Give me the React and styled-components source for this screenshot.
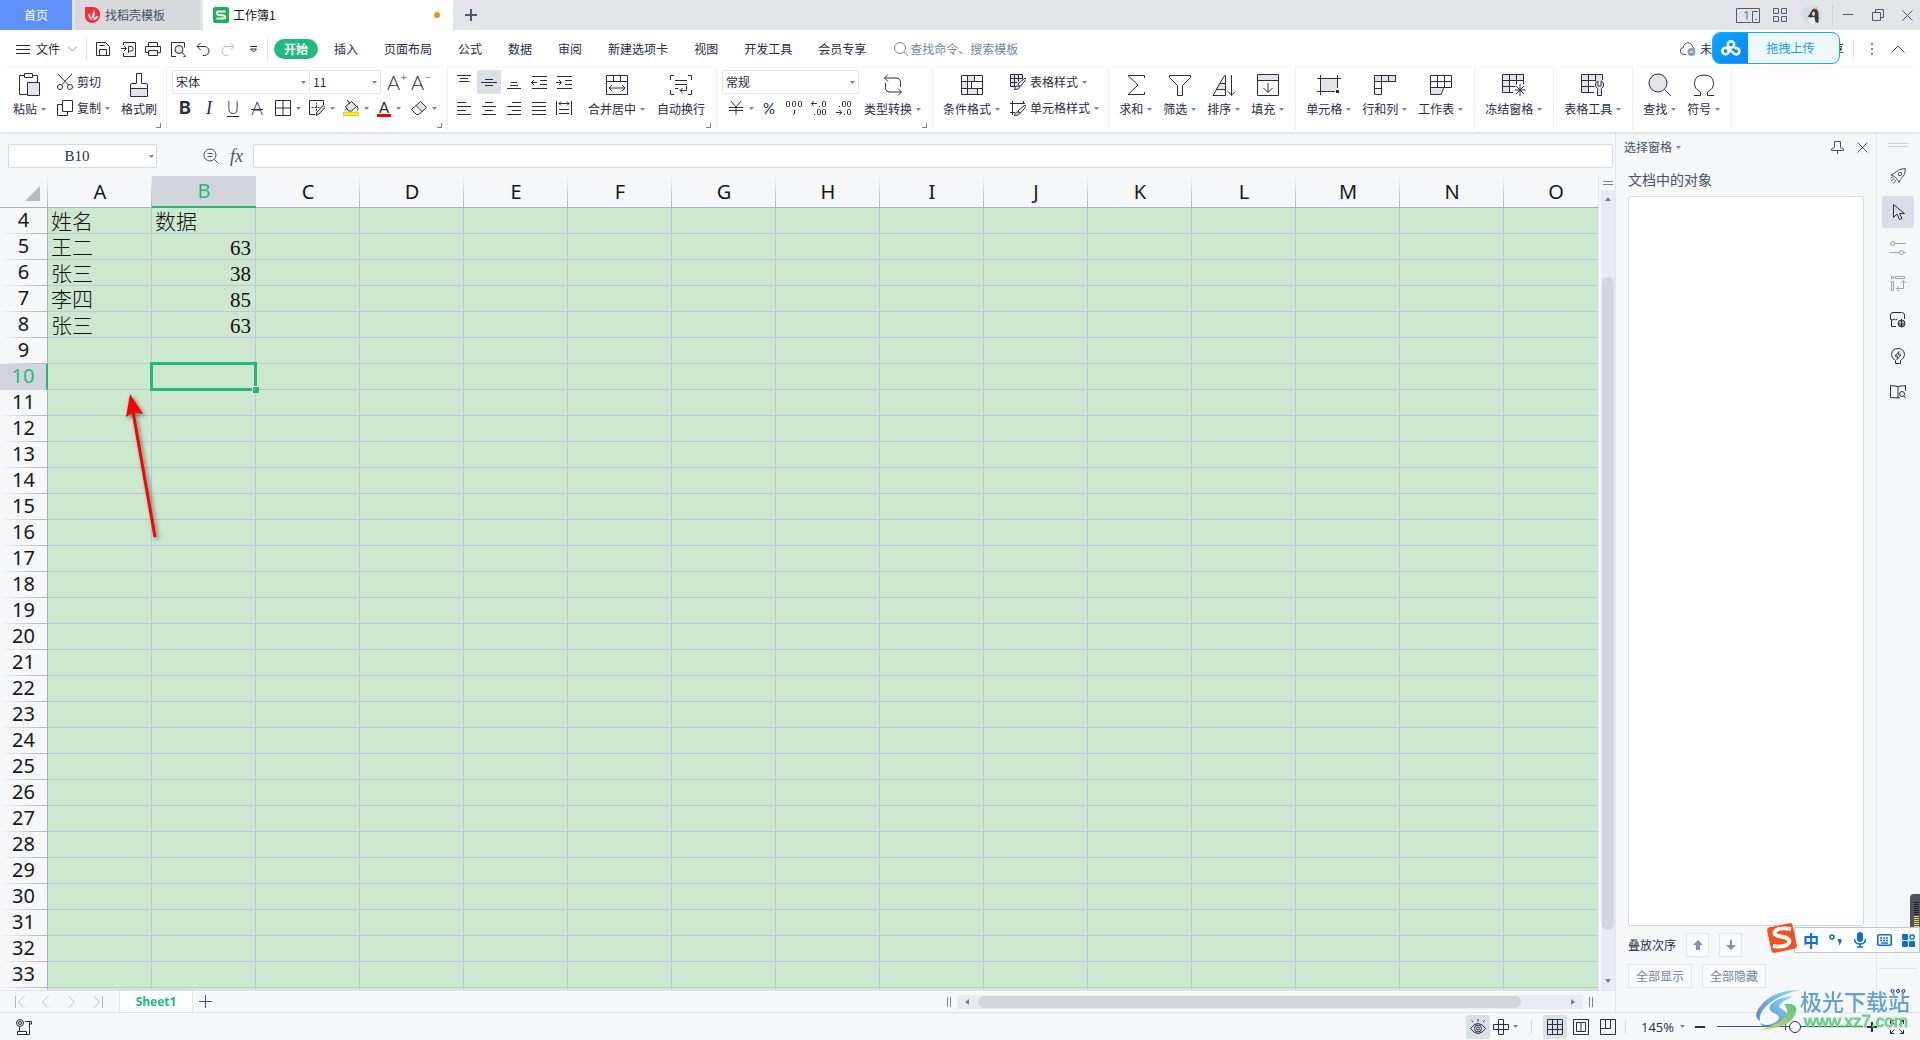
import React from "react";
import styled, { createGlobalStyle, css } from "styled-components";

const c = {
  ink: "#262e42",
  soft: "#46506a",
  muted: "#7684a0",
  faint: "#9aa1b1",
  green: "#21ba7c",
  chrome: "#f5f7f9",
  line: "#e1e4ea",
  field: "#d6d9e0",
  active: "#dae0e6",
  header: "#a9b0c8",
  grid: "#c0c8d6",
  cell: "#cce8cf",
};

const Global = createGlobalStyle`
  * { box-sizing: border-box; }
  html, body, #root { height: 100%; margin: 0; }
  body {
    font: 12px/16px "Noto Sans CJK SC", sans-serif;
    color: ${c.ink};
    overflow: hidden;
  }
  button, input, select {
    font: inherit;
    color: inherit;
    background: none;
    border: 0;
    padding: 0;
    margin: 0;
    outline: 0;
  }
  svg { display: block; flex: none; }
`;

const Page = styled.div`
  height: 100vh;
  display: flex;
  flex-direction: column;
  background: ${c.chrome};
  position: relative;
`;

/* ---------- shared pieces ---------- */
const Draw = styled.svg`
  fill: none;
  stroke: ${(p) => p.$tone || c.ink};
  stroke-width: ${(p) => p.$weight || 1};
`;

function Icon({ w = 16, h = 16, tone, weight, children }) {
  return (
    <Draw width={w} height={h} viewBox={`0 0 ${w} ${h}`} $tone={tone} $weight={weight} aria-hidden="true">
      {children}
    </Draw>
  );
}

const CaretShape = styled.svg`
  fill: ${c.muted};
`;
const Caret = () => (
  <CaretShape width="5" height="3" viewBox="0 0 5 3" aria-hidden="true">
    <path d="M0 0h5L2.5 3z" />
  </CaretShape>
);

const Rule = styled.span`
  width: 1px;
  height: ${(p) => p.$h || 20}px;
  background: ${(p) => p.$tone || c.line};
`;

const G = "#e2e4ea";

/* ---------- title bar ---------- */
const TitleBar = styled.header`
  height: 30px;
  display: flex;
  align-items: stretch;
  background: #e2e4e8;
  flex: none;
`;
const TabStrip = styled.nav`
  display: flex;
  gap: 3px;
`;
const DocTab = styled.button`
  display: flex;
  align-items: center;
  gap: ${(p) => p.$gap || 4}px;
  ${(p) =>
    p.$kind === "home" &&
    css`
      width: 72px;
      justify-content: center;
      color: #fff;
      background: #5f90fb;
    `}
  ${(p) =>
    p.$kind === "idle" &&
    css`
      width: 125px;
      padding-left: 10px;
      color: ${c.soft};
      background: #d8d9dd;
    `}
  ${(p) =>
    p.$kind === "open" &&
    css`
      width: 250px;
      padding: 0 13px 0 10px;
      color: #14161c;
      background: #fff;
    `}
`;
const Unsaved = styled.span`
  width: 6px;
  height: 6px;
  border-radius: 3px;
  margin-left: auto;
  background: #e59a00;
`;
const PlusButton = styled.button`
  width: ${(p) => p.$w}px;
  display: flex;
  align-items: center;
  justify-content: center;
`;
const WindowTools = styled.div`
  margin-left: auto;
  display: flex;
  align-items: center;
`;
const WindowButton = styled.button`
  width: ${(p) => p.$w || 28}px;
  height: 30px;
  display: flex;
  align-items: center;
  justify-content: center;
`;

function Title() {
  return (
    <TitleBar>
      <TabStrip aria-label="文档标签">
        <DocTab $kind="home">首页</DocTab>
        <DocTab $kind="idle">
          <svg width="16" height="16" viewBox="0 0 16 16" aria-hidden="true">
            <path d="M0 0h9a7 7 0 0 1 6 8a8 8 0 0 1-8 8A7 7 0 0 1 0 9z" fill="#fb2c3a" />
            <path d="M7 13C3.800 12 3 9.500 3.500 6.500C5.500 8 6.500 10 7 13zM7.500 12C6.500 8.500 7.300 5 9.500 3C10.500 6.500 9.800 9.500 7.500 12zM8 13.200c1-2.500 2.500-4 5-4.500c-.3 2.600-2 4.300-5 4.500z" fill="#fff" />
          </svg>
          找稻壳模板
        </DocTab>
        <DocTab $kind="open" aria-current="page">
          <svg width="16" height="16" viewBox="0 0 16 16" aria-hidden="true">
            <rect width="16" height="16" rx="2" fill="#1db256" />
            <path d="M12.500 4.500H5.300Q3.800 4.500 3.800 6Q3.800 7.500 5.300 7.800L10.700 8.500Q12.200 8.800 12.200 10.200Q12.200 11.600 10.700 11.600H3.500" fill="none" stroke="#fff" strokeWidth="2" />
          </svg>
          工作簿1
          <Unsaved />
        </DocTab>
      </TabStrip>
      <PlusButton $w={36} aria-label="新建标签">
        <Icon w={12} h={12} tone="#4c5a78" weight={2}>
          <path d="M6 0v12M0 6h12" />
        </Icon>
      </PlusButton>
      <WindowTools>
        <WindowButton $w={40} aria-label="双屏">
          <Icon w={24} h={15} tone="#4c5a78">
            <path d="M15.500 14.500H.5V.5h23v14H16.500V3.500H22M8.500 5L11 3.500v8M19.500 11.500h1.500" />
          </Icon>
        </WindowButton>
        <WindowButton $w={24} aria-label="应用">
          <Icon w={14} h={14} tone="#4c5a78">
            <path d="M.5.5h5v5h-5zM8.500.5h5v5h-5zM.5 8.500h5v5h-5zM8.500 8.500h5v5h-5z" />
          </Icon>
        </WindowButton>
        <WindowButton $w={40} aria-label="账号">
          <svg width="20" height="20" viewBox="0 0 20 20" aria-hidden="true">
            <circle cx="10" cy="10" r="10" fill="#cfdfe4" />
            <path d="M11 4C15 3 17 6 16.500 10.500C16.500 14 17 16 16 18L13.500 17L12.500 12L9 12.500L5.500 11.500C8 10 9.500 5 11 4z" fill="#43363d" />
            <path d="M11.500 6.500c2 0 2 4.500 0 4.500c-2 0-2-4.500 0-4.500z" fill="#ecc9bd" />
            <path d="M6 15l5-3l2 4l-1 3H8z" fill="#e9f1f5" />
            <path d="M12 4l3-1" stroke="#d4a060" strokeWidth="1.500" />
          </svg>
        </WindowButton>
        <Rule $tone="#cccfd6" />
        <WindowButton $w={29} aria-label="最小化">
          <Icon w={10} h={2} tone="#4c5a78"><path d="M0 .5h10" /></Icon>
        </WindowButton>
        <WindowButton $w={32} aria-label="还原">
          <Icon w={12} h={12} tone="#4c5a78">
            <path d="M.5 3.500h8v8h-8zM3.500 3.500v-3h8v8h-3" />
          </Icon>
        </WindowButton>
        <WindowButton $w={26} aria-label="关闭">
          <Icon w={11} h={11} tone="#4c5a78"><path d="M.5.5l10 10M10.500.5l-10 10" /></Icon>
        </WindowButton>
      </WindowTools>
    </TitleBar>
  );
}

/* ---------- menu row ---------- */
const MenuRow = styled.div`
  height: 38px;
  display: flex;
  align-items: center;
  background: #fff;
  flex: none;
`;
const FileButton = styled.button`
  display: flex;
  align-items: center;
  gap: 6px;
  padding: 0 8px 0 16px;
`;
const QuickBar = styled.div`
  display: flex;
  gap: 1px;
  padding: 0 2px 0 4px;
`;
const Tool = styled.button`
  width: 24px;
  height: 24px;
  display: flex;
  align-items: center;
  justify-content: center;
  border-radius: 2px;
  background: ${(p) => (p.$on ? c.active : "transparent")};
`;
const Tabs = styled.nav`
  display: flex;
  gap: 6px;
  padding-left: 6px;
`;
const MenuTab = styled.button`
  height: 20px;
  line-height: 20px;
  padding: 0 10px;
  border-radius: 10px;
  ${(p) =>
    p.$on &&
    css`
      color: #fff;
      font-weight: 700;
      background: ${c.green};
    `}
`;
const Search = styled.label`
  display: flex;
  align-items: center;
  gap: 2px;
  padding-left: 18px;
  input {
    width: 120px;
  }
  input::placeholder {
    color: ${c.muted};
    opacity: 1;
  }
`;
const Share = styled.div`
  margin-left: auto;
  display: flex;
  align-items: center;
  padding-right: 15px;
`;
const CloudButton = styled.button`
  display: flex;
  align-items: center;
  gap: 4px;
`;
const ShareButton = styled.button`
  padding: 0 9px 0 84px;
`;
const MoreButton = styled.button`
  padding: 0 17px;
`;

const cutTabs = ["插入", "页面布局", "公式", "数据", "审阅", "新建选项卡", "视图", "开发工具", "会员专享"];

const quick = [
  ["保存", <path key="p" d="M14.500 14.500h-13v-13h9l4 4zM4.500 14.500V8.500h7v6M4.500 4.500h5" />],
  ["输出", <path key="p" d="M3.500 4v-2.500h12v14h-12V12M1 7.500h5M4 5l2.500 2.500L4 10M8.500 12v-6.500H11a2 2 0 0 1 0 4.500H8.500" />],
  ["打印", <path key="p" d="M3.500 5.500v-4h9v4M3.500 11.500h-3v-6h15v6h-3M3.500 9.500h9v5h-9z" />],
  ["预览", <g key="p"><path d="M6 15.500H1.500v-14h13v5M13.500 15.500h2" /><circle cx="9" cy="8.500" r="4" fill={G} /><path d="M12 11.500l3.500 3.500" /></g>],
  ["撤销", <path key="p" d="M5.500 2L2 5.500L5.500 9M2.500 5.500h7a4.500 4.500 0 0 1 0 9H8" />],
  ["重做", <path key="p" stroke="#b9bcc4" d="M10.500 2L14 5.500L10.500 9M13.500 5.500h-7a4.500 4.500 0 0 0 0 9H8" />],
  ["更多", <path key="p" d="M5 5.500h7M5.500 8l3 3l3-3z" />],
];

function Menu() {
  return (
    <MenuRow>
      <FileButton>
        <Icon w={14} h={11}><path d="M0 1.500h14M0 5.500h14M0 9.500h14" /></Icon>
        文件
        <Icon w={12} h={6} tone={c.faint}><path d="M2 .5l4.500 4.500L11 .5" /></Icon>
      </FileButton>
      <Rule $h={24} />
      <QuickBar>
        {quick.map(([name, art]) => (
          <Tool key={name} aria-label={name}><Icon>{art}</Icon></Tool>
        ))}
      </QuickBar>
      <Rule $h={24} />
      <Tabs aria-label="功能区">
        <MenuTab $on>开始</MenuTab>
        {cutTabs.map((t) => (
          <MenuTab key={t}>{t}</MenuTab>
        ))}
      </Tabs>
      <Search>
        <Icon w={14} h={14} tone={c.muted}>
          <circle cx="6" cy="6" r="5.500" />
          <path d="M10 10l4 4" />
        </Icon>
        <input type="text" aria-label="搜索" placeholder="查找命令、搜索模板" />
      </Search>
      <Share>
        <CloudButton>
          <Icon tone={c.soft}>
            <path d="M6 13.500H4a3.500 3.500 0 0 1-.5-7a4.500 4.500 0 0 1 9-.5q1.500.5 2 2" />
            <circle cx="11.500" cy="11" r="4" fill="#8f9ab2" stroke="none" />
            <path d="M9.500 11h4" stroke="#fff" />
          </Icon>
          未同步
        </CloudButton>
        <ShareButton>分享</ShareButton>
        <Rule />
        <MoreButton aria-label="更多">
          <svg width="3" height="13" viewBox="0 0 3 13" fill={c.muted} aria-hidden="true">
            <path d="M0 0h2v2H0zM0 5h2v2H0zM0 10h2v2H0z" />
          </svg>
        </MoreButton>
        <button aria-label="收起功能区">
          <Icon w={14} h={8} tone={c.soft}><path d="M.5 7.500L7 1l6.500 6.500" /></Icon>
        </button>
      </Share>
    </MenuRow>
  );
}

/* ---------- ribbon ---------- */
const RibbonBar = styled.section`
  height: 64px;
  display: flex;
  flex: none;
  background: #fff;
  padding-bottom: 2px;
  box-shadow: 0 1px 3px rgba(60, 70, 90, 0.18);
  position: relative;
  z-index: 1;
`;
const Group = styled.div`
  position: relative;
  display: flex;
  gap: ${(p) => p.$gap || 11}px;
  padding: 0 ${(p) => p.$end || 11}px 0 ${(p) => p.$start || 10}px;
  border-right: 1px solid #ebedf1;
`;
const Launcher = styled.button`
  position: absolute;
  right: 5px;
  bottom: 2px;
  width: 5px;
  height: 5px;
  border: solid ${c.muted};
  border-width: 0 1px 1px 0;
`;
const Big = styled.button`
  display: flex;
  flex-direction: column;
  align-items: center;
  justify-content: flex-start;
  gap: 4px;
  padding-top: 5px;
`;
const IconBox = styled.span`
  height: 24px;
  display: flex;
  align-items: center;
`;
const Label = styled.span`
  display: flex;
  align-items: center;
  gap: 4px;
  white-space: nowrap;
`;
const Stack = styled.div`
  display: flex;
  flex-direction: column;
  gap: 2px;
  padding-top: 2px;
`;
const ToolRow = styled.div`
  display: flex;
  gap: ${(p) => p.$gap || 0}px;
  padding-left: ${(p) => p.$start || 0}px;
`;
const Wide = styled.button`
  height: 24px;
  display: flex;
  align-items: center;
  gap: 4px;
  white-space: nowrap;
`;
const DropTool = styled.button`
  width: 34px;
  height: 24px;
  display: flex;
  align-items: center;
  gap: 5px;
  padding-left: 6px;
`;
const Field = styled.span`
  width: ${(p) => p.$w}px;
  height: 24px;
  display: flex;
  align-items: center;
  padding: 0 3px;
  background: #fff;
  border: 1px solid ${c.line};
  border-radius: 2px;
  & + & {
    border-left: 0;
  }
  select {
    flex: 1;
    min-width: 0;
    appearance: none;
  }
`;
const Glyph = styled.span`
  font: ${(p) => p.$font || "300 18px/20px Lato, sans-serif"};
  text-decoration: ${(p) => p.$line || "none"};
  text-underline-offset: 2px;
  text-decoration-thickness: 1px;
`;
const ColorGlyph = styled.span`
  width: 14px;
  height: 17px;
  display: flex;
  justify-content: center;
  border-bottom: 3px solid #f00;
  font: 400 15px/14px Lato, sans-serif;
`;
const SizeGlyph = styled.span`
  display: flex;
  font: 300 20px/20px Lato, sans-serif;
  sup {
    font-size: 12px;
    line-height: 10px;
  }
`;

function BigTool({ name, drop, w = 22, h = 22, children }) {
  return (
    <Big>
      <IconBox><Icon w={w} h={h}>{children}</Icon></IconBox>
      <Label>{name}{drop && <Caret />}</Label>
    </Big>
  );
}

const lines = (a) => <Icon><path d={a} /></Icon>;

function Ribbon() {
  return (
    <RibbonBar aria-label="开始">
      <Group $start={13} $end={9}>
        <BigTool name="粘贴" drop w={22} h={24}>
          <path d="M5.500 2.500h-5v19h8M13.500 2.500h5v7M5.500.5h8v4h-8z" />
          <path d="M8.500 9.500h12v13h-12z" fill={G} />
        </BigTool>
        <Stack>
          <Wide>
            <Icon>
              <circle cx="3" cy="13" r="2.500" /><circle cx="13" cy="13" r="2.500" />
              <path d="M1 0l10.500 11M15 0L4.500 11" />
            </Icon>
            剪切
          </Wide>
          <Wide>
            <Icon><path d="M5.500.5h10v11h-10zM5.500 4.500h-5v11h10v-4" /></Icon>
            <Label>复制<Caret /></Label>
          </Wide>
        </Stack>
        <BigTool name="格式刷" w={18} h={24}>
          <path d="M.5 15.500h17v8H.5z" fill={G} />
          <path d="M.5 15.500v-3.500q0-1.500 1.500-1.500h4.500V.5h5v10H16q1.500 0 1.500 1.500v3.500" />
        </BigTool>
        <Launcher aria-label="剪贴板设置" />
      </Group>

      <Group $start={5} $end={8}>
        <Stack>
          <ToolRow>
            <Field $w={138}>
              <select aria-label="字体"><option>宋体</option></select>
              <Caret />
            </Field>
            <Field $w={71}>
              <select aria-label="字号"><option>11</option></select>
              <Caret />
            </Field>
            <ToolRow $start={4}>
              <Tool aria-label="增大字号"><SizeGlyph>A<sup>+</sup></SizeGlyph></Tool>
              <Tool aria-label="减小字号"><SizeGlyph>A<sup>−</sup></SizeGlyph></Tool>
            </ToolRow>
          </ToolRow>
          <ToolRow $start={1}>
            <Tool aria-label="加粗"><Glyph $font="700 18px/20px Inter, sans-serif">B</Glyph></Tool>
            <Tool aria-label="倾斜"><Glyph $font="italic 300 18px/20px 'Liberation Serif', serif">I</Glyph></Tool>
            <Tool aria-label="下划线"><Glyph $line="underline" $font="300 17px/18px Lato, sans-serif">U</Glyph></Tool>
            <Tool aria-label="删除线"><Glyph $line="line-through">A</Glyph></Tool>
            <DropTool aria-label="边框">{lines("M.5.5h15v15H.5zM8 .5v15M.5 8h15")}<Caret /></DropTool>
            <DropTool aria-label="绘制边框">
              <Icon>
                <path d="M6 14.500H.5V.5h14V5" />
                <path d="M7.500 2.500v9M2.500 7.500h8" strokeDasharray="2 1" />
                <path d="M7 15.500l1-3.500L14 5.500l2 2L10 14z" fill={G} />
              </Icon>
              <Caret />
            </DropTool>
            <DropTool aria-label="填充颜色">
              <Icon>
                <path d="M2.500 6.500L8.500 1.500l5 5l-5 4.500H5.500z" fill={G} />
                <path d="M6 4V1.500L4 .5M14 6q2 3 .5 4.500M2 10.500L4 8" />
                <rect x="0" y="12" width="16" height="3.500" rx="1.500" fill="#fff200" stroke="#8a8a60" strokeWidth=".5" />
              </Icon>
              <Caret />
            </DropTool>
            <DropTool aria-label="字体颜色"><ColorGlyph>A</ColorGlyph><Caret /></DropTool>
            <DropTool aria-label="清除">
              <Icon>
                <path d="M5 5.500L9.500 1.500L15.500 7.500L11 11.500z" fill={G} />
                <path d="M5 5.500L.5 9.500l5 5h2L11 11.500" />
              </Icon>
              <Caret />
            </DropTool>
          </ToolRow>
        </Stack>
        <Launcher aria-label="字体设置" />
      </Group>

      <Group $start={4} $gap={12}>
        <Stack>
          <ToolRow $gap={1}>
            <Tool aria-label="顶端对齐">{lines("M1 1.500h14M4 4.500h8M3 7.500h10")}</Tool>
            <Tool $on aria-label="垂直居中">{lines("M4 5.500h8M0 8.500h16M4 11.500h8")}</Tool>
            <Tool aria-label="底端对齐">{lines("M5 8.500h6M4 11.500h8M1 14.500h14")}</Tool>
            <Tool aria-label="减少缩进">{lines("M1 2.500h15M9 6.500h7M9 10.500h7M1 14.500h15M0 8.500h6M3 6L.5 8.500L3 11")}</Tool>
            <Tool aria-label="增加缩进">{lines("M1 2.500h15M9 6.500h7M9 10.500h7M1 14.500h15M0 8.500h6M3 6L5.500 8.500L3 11")}</Tool>
          </ToolRow>
          <ToolRow $gap={1}>
            <Tool aria-label="左对齐">{lines("M1 2.500h9M1 6.500h14M1 10.500h9M1 14.500h14")}</Tool>
            <Tool aria-label="居中">{lines("M4 2.500h8M1 6.500h14M4 10.500h8M1 14.500h14")}</Tool>
            <Tool aria-label="右对齐">{lines("M6 2.500h9M1 6.500h14M6 10.500h9M1 14.500h14")}</Tool>
            <Tool aria-label="两端对齐">{lines("M1 2.500h14M1 6.500h14M1 10.500h14M1 14.500h14")}</Tool>
            <Tool aria-label="分散对齐">{lines("M.5 1v14M15.500 1v14M3 3.500h10M5 1.500l-2 2l2 2M11 1.500l2 2l-2 2M3 9.500h10M3 13.500h10")}</Tool>
          </ToolRow>
        </Stack>
        <BigTool name="合并居中" drop h={20}>
          <path d="M.5.5h21v19H.5zM.5 6.500h21M7.500.5v6M14.500.5v6M3.500 13h15M6 10l-3 3l3 3M16 10l3 3l-3 3" />
        </BigTool>
        <BigTool name="自动换行" h={20}>
          <path d="M4 .5H.5V5M18 .5h3.500V5M.5 15v4.500H4M21.500 15v4.500H18M5 5.500h12M5 9.500h12M5 13.500h3M16.500 11v4.500h-6M13 13l-3 2.500l3 3" />
        </BigTool>
        <Launcher aria-label="对齐设置" />
      </Group>

      <Group $start={5} $gap={5}>
        <Stack>
          <Field $w={137}>
            <select aria-label="数字格式"><option>常规</option></select>
            <Caret />
          </Field>
          <ToolRow $gap={1}>
            <DropTool aria-label="货币">{lines("M3 1l5 6l5-6M1 7.500h14M1 10.500h14M8 7v8")}<Caret /></DropTool>
            <Tool aria-label="百分比"><Glyph $font="400 15px/18px Lato, sans-serif">%</Glyph></Tool>
            <Tool aria-label="千位分隔">
              <Icon w={18}>
                <rect x="1.500" y="1.500" width="3" height="5" rx="1" /><rect x="7.500" y="1.500" width="3" height="5" rx="1" /><rect x="13.500" y="1.500" width="3" height="5" rx="1" />
                <path d="M9.500 10v3l-1 2" />
              </Icon>
            </Tool>
            <Tool aria-label="增加小数">
              <Icon>
                <path d="M0 3.500h6M2.500 1L.5 3.500L2.500 6M8.500 6v1M3.500 14v1" />
                <rect x="11.500" y="1.500" width="3" height="5" rx="1" /><rect x="6.500" y="9.500" width="3" height="5" rx="1" /><rect x="11.500" y="9.500" width="3" height="5" rx="1" />
              </Icon>
            </Tool>
            <Tool aria-label="减少小数">
              <Icon>
                <path d="M0 12.500h6M3.500 10l2 2.500L3.500 15M8.500 14v1M3.500 6v1" />
                <rect x="11.500" y="9.500" width="3" height="5" rx="1" /><rect x="6.500" y="1.500" width="3" height="5" rx="1" /><rect x="11.500" y="1.500" width="3" height="5" rx="1" />
              </Icon>
            </Tool>
          </ToolRow>
        </Stack>
        <BigTool name="类型转换" drop w={20}>
          <path d="M5 .5L1.500 4L5 7.500M2 4h11q4.500 0 4.500 4.500V13M15 14.500l3.500 3.500L15 21.500M18 18H7q-4.500 0-4.500-4.500V9" />
        </BigTool>
        <Launcher aria-label="数字设置" />
      </Group>

      <Group $gap={10} $end={9}>
        <BigTool name="条件格式" drop h={20}>
          <path d="M6 1h8v6H6zM1 7h5v6H1zM14 13h2v6H6v-6z" fill={G} stroke="none" />
          <path d="M.5.5h21v19H.5zM.5 6.500h21M.5 13.500h21M6.500.5v19M13.500.5v6M10.500 6.500v7M16.500 13.500v6" />
        </BigTool>
        <Stack>
          <Wide>
            <Icon>
              <path d="M.5.5h13v13H.5z" fill={G} stroke="none" />
              <path d="M7 12.500H.5V.5h12V5M.5 4.500h12M.5 8.500h7M4.500.5v12M8.500.5v7" />
              <path d="M8 10l7-6l1 1.500l-6 7z" fill="#fff" /><path d="M4.500 15.500q1-5 5-3q.5 3-5 3z" fill={G} />
            </Icon>
            <Label>表格样式<Caret /></Label>
          </Wide>
          <Wide>
            <Icon>
              <path d="M0 3.500h15M2.500 1v14M13.500 1v3M0 12.500h5" />
              <path d="M8 11l7-6l1 1.500l-6 7z" fill="#fff" /><path d="M4.500 15.500q1-5 5-3q.5 3-5 3z" fill={G} />
            </Icon>
            <Label>单元格样式<Caret /></Label>
          </Wide>
        </Stack>
      </Group>

      <Group>
        <BigTool name="求和" drop w={18}>
          <path d="M17.500 4V1.500H1L11 11L1 20.500h16.500V18" />
        </BigTool>
        <BigTool name="筛选" drop>
          <path d="M.5 1.500h21v2l-8 8v10h-5v-10l-8-8z" />
        </BigTool>
        <BigTool name="排序" drop w={24}>
          <path d="M7 9.500h6.500v6H3z" fill={G} stroke="none" />
          <path d="M1 21.500L12.500 1.500h1v20M8 9.500h5.500M4 15.500h9.500M1 21.500h12.500M19.500 1v20M16 17.500l3.500 4l3.500-4" />
        </BigTool>
        <BigTool name="填充" drop>
          <path d="M1 1h20v5H1z" fill={G} stroke="none" />
          <path d="M.5.5h21v21H.5zM.5 6.500h21M11 9v9M6.500 14l4.500 4.500l4.500-4.500" />
        </BigTool>
      </Group>

      <Group>
        <BigTool name="单元格" drop w={24} h={20}>
          <path d="M4 4h16v12H4z" fill={G} stroke="none" />
          <path d="M0 3.500h24M0 16.500h18M3.500 0v20M20.500 0v13" />
          <path d="M19 15h3v3h-3z" fill={c.ink} stroke="none" />
        </BigTool>
        <BigTool name="行和列" drop h={20}>
          <path d="M.5.500h21v6H.5z" fill={G} />
          <path d="M.5.5h21v6h-14v13h-7zM7.500.5v6M14.500.5v6M.5 6.500h7M.5 13.500h7" />
        </BigTool>
        <BigTool name="工作表" drop h={20}>
          <path d="M1 13h12l-2 6H1z" fill={G} stroke="none" />
          <path d="M.5.5h21v12h-21zM.5 6.500h21M7.500.5v12M14.500.5v12M.5 12.500v7H11l3-7" />
        </BigTool>
      </Group>

      <Group>
        <BigTool name="冻结窗格" drop w={24}>
          <path d="M1 1h20v6H7v12H1z" fill={G} stroke="none" />
          <path d="M21.500 10V.5H.5v18H11M.5 6.500h21M.5 12.500h13M7.500.5v18M14.500.5v10M18 10v12M12.500 16h11M14 12l8 8M22 12l-8 8" />
        </BigTool>
      </Group>

      <Group>
        <BigTool name="表格工具" drop w={24}>
          <path d="M1 1h6v18H1zM7 1h14v6H7z" fill={G} stroke="none" />
          <path d="M21.500 6V.5H.5v18H13M.5 6.500h14M.5 12.500h13M7.500.5v18M14.500.5v7" />
          <path d="M16.500 21.500v-7q-2.500-1.500-2-4.500q.5-2.500 2.500-3v5h3v-5q2 .5 2.500 3q.5 3-2 4.500v7z" fill={G} />
        </BigTool>
      </Group>

      <Group>
        <BigTool name="查找" drop w={24} h={24}>
          <circle cx="10" cy="10" r="9" fill={G} />
          <path d="M16.500 16.500l6.500 6.500" />
        </BigTool>
        <BigTool name="符号" drop>
          <path d="M1 21.500h6.500V18Q1.500 15 1.500 9.500Q1.500 1 11 1T20.500 9.500Q20.500 15 14.500 18v3.500H21" />
        </BigTool>
      </Group>
    </RibbonBar>
  );
}

/* ---------- workspace ---------- */
const Workspace = styled.div`
  flex: 1;
  min-height: 0;
  display: flex;
`;
const Main = styled.main`
  flex: 1;
  min-width: 0;
  display: flex;
  flex-direction: column;
`;
const FormulaBar = styled.div`
  height: 44px;
  flex: none;
  display: flex;
  align-items: center;
  padding: 4px 2px 0 8px;
`;
const NameBox = styled.div`
  width: 149px;
  height: 24px;
  display: flex;
  align-items: center;
  padding: 0 2px;
  background: #fff;
  border: 1px solid ${c.field};
  border-radius: 2px;
  input {
    flex: 1;
    min-width: 0;
    padding-right: 6px;
    text-align: center;
    font: 15px/20px "Liberation Serif", serif;
  }
`;
const FormulaTools = styled.div`
  display: flex;
  align-items: center;
  gap: 11px;
  padding: 0 10px 0 46px;
  font: italic 18px/20px "Liberation Serif", serif;
  color: ${c.soft};
`;
const FormulaInput = styled.input`
  flex: 1;
  min-width: 0;
  height: 24px;
  background: #fff;
  border: 1px solid ${c.field};
  border-radius: 2px;
`;

const SheetArea = styled.div`
  flex: 1;
  min-height: 0;
  display: flex;
  gap: 2px;
`;
const Viewport = styled.div`
  flex: 1;
  min-width: 0;
  overflow: hidden;
  position: relative;
  border-right: 1px solid ${c.line};
`;
const Grid = styled.table`
  table-layout: fixed;
  width: 1608px;
  border-collapse: separate;
  border-spacing: 0;
`;
const ColHead = styled.th`
  width: ${(p) => p.$w || 104}px;
  height: 32px;
  padding: 0;
  font: 400 20px/28px "Noto Sans", "Open Sans", sans-serif;
  color: #15171c;
  border-bottom: 1px solid ${c.header};
  background: linear-gradient(to top, ${c.header}, transparent) no-repeat right / 1px 100%;
  ${(p) =>
    p.$on &&
    css`
      color: ${c.green};
      background: #d1d4dd;
      border-bottom: 2px solid ${c.green};
    `}
  svg {
    margin: 4px 0 0 25px;
  }
`;
const RowHead = styled.th`
  height: 26px;
  padding: 0 0 2px;
  font: 400 20px/24px "Noto Sans", "Open Sans", sans-serif;
  color: #15171c;
  border-right: 1px solid ${c.header};
  background: linear-gradient(to left, ${c.header}, transparent) no-repeat bottom / 100% 1px;
  ${(p) =>
    p.$on &&
    css`
      color: ${c.green};
      background: #d1d4dd;
      border-right: 2px solid ${c.green};
    `}
`;
const Cell = styled.td`
  height: 26px;
  padding: 4px 4px 0 3px;
  position: relative;
  background: ${c.cell};
  border: solid ${c.grid};
  border-width: 0 1px 1px 0;
  text-align: ${(p) => (p.$num ? "right" : "left")};
  font: 300 21px/21px "Liberation Serif", "Noto Sans CJK SC", serif;
  color: #111;
`;
const Selection = styled.span`
  position: absolute;
  z-index: 1;
  inset: -2px;
  border: 3px solid ${c.green};
  &::after {
    content: "";
    position: absolute;
    right: -5px;
    bottom: -5px;
    width: 6px;
    height: 6px;
    background: ${c.green};
    border: solid #fff;
    border-width: 1px 0 0 1px;
  }
`;
const Arrow = styled.svg`
  position: absolute;
  left: 120px;
  top: 212px;
  filter: drop-shadow(2px 2px 2px rgba(0, 0, 0, 0.5));
`;

const VScroll = styled.div`
  width: 14px;
  display: flex;
  flex-direction: column;
  align-items: center;
`;
const SplitGrip = styled.span`
  width: 10px;
  height: 4px;
  margin: 5px 0;
  border: solid ${c.muted};
  border-width: 1px 0;
`;
const VTrack = styled.div`
  flex: 1;
  align-self: stretch;
  display: flex;
  flex-direction: column;
  align-items: center;
  padding: 7px 1px;
  background: #e9ebf0;
`;
const VSpace = styled.span`
  flex: ${(p) => p.$n};
`;
const VThumb = styled.span`
  flex: 650;
  align-self: stretch;
  border-radius: 6px;
  background: #d3d6df;
`;

const SheetBar = styled.div`
  height: 23px;
  flex: none;
  display: flex;
  align-items: center;
  border-top: 1px solid ${c.line};
  border-bottom: 1px solid ${c.line};
`;
const SheetNav = styled.div`
  display: flex;
  align-items: center;
  gap: 16px;
  padding: 0 16px 0 15px;
`;
const SheetTab = styled.button`
  align-self: stretch;
  width: 74px;
  color: ${c.green};
  font: 700 12px/20px "Open Sans", "Noto Sans", sans-serif;
  background: #fff;
  border-right: 1px solid ${c.line};
  border-left: 1px solid ${c.line};
`;
const HScroll = styled.div`
  width: 668px;
  margin-left: auto;
  padding-right: 22px;
  display: flex;
  align-items: center;
  gap: 6px;
`;
const HGrip = styled.span`
  width: 4px;
  height: 10px;
  border: solid ${c.muted};
  border-width: 0 1px;
`;
const HTrack = styled.div`
  flex: 1;
  height: 14px;
  display: flex;
  align-items: center;
  padding: 0 8px;
  background: #e9ebf0;
`;
const HThumb = styled.span`
  flex: 546;
  height: 12px;
  margin-left: 9px;
  border-radius: 6px;
  background: #d3d6df;
`;
const HSpace = styled.span`
  flex: 50;
`;

const columns = "ABCDEFGHIJKLMNO".split("");
const firstRow = 4;
const lastRow = 33;
const data = {
  A4: "姓名", B4: "数据",
  A5: "王二", B5: 63,
  A6: "张三", B6: 38,
  A7: "李四", B7: 85,
  A8: "张三", B8: 63,
};

function Sheet() {
  // One extra row without a number fills the strip under the last full row.
  const rows = Array.from({ length: lastRow - firstRow + 2 }, (_, i) => firstRow + i);
  return (
    <Viewport>
      <Grid>
        <thead>
          <tr>
            <ColHead $w={48} aria-label="全选">
              <svg width="15" height="15" viewBox="0 0 15 15" aria-hidden="true">
                <path d="M15 0v15H0z" fill="#b9bbc0" />
              </svg>
            </ColHead>
            {columns.map((k) => (
              <ColHead key={k} $on={k === "B"} scope="col">{k}</ColHead>
            ))}
          </tr>
        </thead>
        <tbody>
          {rows.map((r) => (
            <tr key={r}>
              <RowHead $on={r === 10} scope="row">{r <= lastRow ? r : null}</RowHead>
              {columns.map((k) => (
                <Cell key={k} $num={typeof data[k + r] === "number"}>
                  {data[k + r]}
                  {k === "B" && r === 10 && <Selection />}
                </Cell>
              ))}
            </tr>
          ))}
        </tbody>
      </Grid>
      <Arrow width="44" height="156" viewBox="0 0 44 156" aria-hidden="true">
        <path d="M12 18l23 131" stroke="#f00" strokeWidth="3" />
        <path d="M10 6L23 26L14 24L6 29z" fill="#f00" />
      </Arrow>
    </Viewport>
  );
}

const ArrowMark = ({ d, w = 6, h = 4 }) => (
  <CaretShape width={w} height={h} viewBox={`0 0 ${w} ${h}`} aria-hidden="true">
    <path d={d} />
  </CaretShape>
);

/* ---------- selection pane ---------- */
const Pane = styled.aside`
  width: 262px;
  display: flex;
  flex-direction: column;
  border: solid ${c.line};
  border-width: 0 1px 1px 1px;
  color: ${c.soft};
  padding: 0 12px 24px;
`;
const PaneHead = styled.div`
  height: 30px;
  display: flex;
  align-items: center;
  gap: 13px;
  margin: 0 -4px;
  button:first-child {
    margin-right: auto;
  }
`;
const PaneTitle = styled.h2`
  margin: 0;
  font: 400 14px/20px "Noto Sans CJK SC", sans-serif;
  padding: 7px 0;
`;
const ObjectList = styled.ul`
  flex: 1;
  margin: 0;
  padding: 0;
  list-style: none;
  background: #fff;
  border: 1px solid ${c.field};
  border-radius: 2px;
`;
const OrderRow = styled.div`
  display: flex;
  align-items: center;
  gap: 10px;
  padding-top: 7px;
  color: ${c.ink};
`;
const PaneButton = styled.button`
  width: ${(p) => p.$w}px;
  height: ${(p) => p.$h || 24}px;
  display: flex;
  align-items: center;
  justify-content: center;
  color: ${c.muted};
  background: #f8fafb;
  border: 1px solid ${c.line};
`;

const MoveIcon = ({ d }) => (
  <Icon w={10} h={10} tone="none">
    <path d={d} fill="#8790a4" />
  </Icon>
);

function SelectionPane() {
  return (
    <Pane>
      <PaneHead>
        <button><Label>选择窗格<Caret /></Label></button>
        <button aria-label="固定">
          <Icon w={13} h={14} tone={c.soft}>
            <path d="M3.500 1.500h6v6l3 1.500v1.500H.5V9l3-1.500zM6.500 10.500V14" />
          </Icon>
        </button>
        <button aria-label="关闭窗格">
          <Icon w={11} h={11} tone={c.soft}><path d="M.5.5l10 10M10.500.5l-10 10" /></Icon>
        </button>
      </PaneHead>
      <PaneTitle>文档中的对象</PaneTitle>
      <ObjectList aria-label="文档中的对象" />
      <OrderRow>
        叠放次序
        <PaneButton $w={23} aria-label="上移"><MoveIcon d="M5 0l5 5H7v5H3V5H0z" /></PaneButton>
        <PaneButton $w={23} aria-label="下移"><MoveIcon d="M5 10l5-5H6V0H4v5H0z" /></PaneButton>
      </OrderRow>
      <OrderRow>
        <PaneButton $w={64}>全部显示</PaneButton>
        <PaneButton $w={64}>全部隐藏</PaneButton>
      </OrderRow>
    </Pane>
  );
}

/* ---------- task rail ---------- */
const Rail = styled.nav`
  width: 43px;
  padding-right: 1px;
  display: flex;
  flex-direction: column;
  align-items: center;
  gap: 4px;
  border-bottom: 1px solid ${c.line};
`;
const RailGrip = styled.span`
  width: 20px;
  height: 4px;
  margin: 11px 0 9px;
  border: solid #cdd0d6;
  border-width: 1px 0;
`;
const RailButton = styled.button`
  width: 32px;
  height: 32px;
  display: flex;
  align-items: center;
  justify-content: center;
  border-radius: 2px;
  background: ${(p) => (p.$on ? "#d9dee6" : "transparent")};
`;
const RailFoot = styled.div`
  margin-top: auto;
  width: 38px;
  height: 44px;
  display: flex;
  align-items: center;
  justify-content: center;
  border-top: 1px solid ${c.line};
`;

const rail = [
  ["助手", c.soft, <g key="g"><path d="M15.500.5q.5 6-5 11l-1.500 3l-2-3.500l-2.500-2.500L1 7l3-1.500Q9 0 15.500.5zM4.500 10L1 13M6 12l-2.500 3.500M3 8.500L.5 10.500" /><circle cx="10" cy="6" r="1.700" /></g>],
  ["选择", c.ink, <path key="p" d="M3.500.5v13l3.500-3.500l2.500 5.500l2.500-1L9.500 9.500h5z" />],
  ["设置", c.faint, <g key="g"><circle cx="2.500" cy="3.500" r="2" /><path d="M4.500 3.500H16M0 12.500h9.500M13.500 12.500H16" /><circle cx="11.500" cy="12.500" r="2" /></g>],
  ["属性", c.faint, <path key="p" d="M1.500.5h2v2h-2zM5.500.5h9v2h-9zM1.500 5.500h2v9h-2zM13.500 5v7.500H7M11 7l2.500-2.500L16 7M9 10l-2.500 2.500L9 15" />],
  ["素材", c.ink, <g key="g"><path d="M6 14.500H1.500V8M.5 7.500V3q0-2.500 2.500-2.500h8.500Q14.500.5 14.500 3v4M.5 7q2 2 3.500 0q2 2 3.500 0" /><circle cx="11.500" cy="11.500" r="3.500" fill="#aeb3be" /><path d="M11.500 7v8M8.500 11l3 3l3-3" /></g>],
  ["灵感", c.ink, <g key="g"><path d="M5.500 12.500Q1.500 10.500 1.500 6.500Q2 .5 8 .5T14.500 6.500Q14.500 10.500 10.500 12.500v3h-5z" /><path d="M9 3.500L5 8h2.500l-.5 3.500l4-4.500H8.500z" /></g>],
  ["查阅", c.ink, <g key="g"><path d="M8 14L.5 13.500v-12L8 2.500zM8 2.500l7.500-1V7M8 14l2-.5" /><circle cx="12" cy="10" r="2.500" /><path d="M14 12l2 2.500" /></g>],
];

function TaskRail() {
  return (
    <Rail aria-label="任务窗格">
      <RailGrip />
      {rail.map(([name, tone, art]) => (
        <RailButton key={name} aria-label={name} $on={name === "选择"}>
          <Icon tone={tone}>{art}</Icon>
        </RailButton>
      ))}
      <RailFoot>
        <Icon w={16} h={6}>
          <circle cx="2.500" cy="3" r="1.500" /><circle cx="8" cy="3" r="1.500" /><circle cx="13.500" cy="3" r="1.500" />
        </Icon>
      </RailFoot>
    </Rail>
  );
}

/* ---------- status bar ---------- */
const StatusBar = styled.footer`
  height: 27px;
  flex: none;
  display: flex;
  align-items: center;
  padding: 0 16px;
`;
const ViewTools = styled.div`
  margin-left: auto;
  display: flex;
  align-items: center;
`;
const ViewButton = styled(Tool)`
  width: ${(p) => p.$w || 24}px;
  gap: 4px;
`;
const ZoomButton = styled.button`
  display: flex;
  align-items: center;
  gap: 6px;
  padding: 0 10px;
  font: 400 13px/16px "Open Sans", "Noto Sans", sans-serif;
`;
const FullScreen = styled.button`
  padding-left: 13px;
`;
const Slider = styled.input`
  appearance: none;
  width: 146px;
  height: 14px;
  margin: 0 4px 0 12px;
  background:
    linear-gradient(${c.soft}, ${c.soft}) no-repeat 68px center / 1px 6px,
    linear-gradient(${c.soft}, ${c.soft}) no-repeat center / 100% 1px;
  &::-webkit-slider-thumb {
    appearance: none;
    width: 12px;
    height: 12px;
    border: 1px solid ${c.ink};
    border-radius: 6px;
    background: ${c.chrome};
  }
`;

function Status() {
  return (
    <StatusBar>
      <button aria-label="宏">
        <Icon>
          <circle cx="4" cy="4" r="3.500" fill={G} /><circle cx="4" cy="4" r="1.500" />
          <path d="M9 2.500h6.500V5H13M13.500 2.500v13H1.500v-3h9v3M3.500 8v4" />
        </Icon>
      </button>
      <ViewTools>
        <ViewButton $on aria-label="护眼模式">
          <Icon>
            <path d="M.5 9.500Q4 4.500 8 4.500T15.500 9.500Q12 14.500 8 14.500T.5 9.500zM8 0v2.500M1.500 1.500L3 3M14.500 1.500L13 3" />
            <circle cx="8" cy="9.500" r="3.500" /><circle cx="8" cy="9.500" r="1.500" />
          </Icon>
        </ViewButton>
        <ViewButton $w={31} aria-label="阅读模式">
          <Icon><path d="M5.500.5h5v15h-5zM.5 5.500h15v5H.5z" /></Icon>
          <Caret />
        </ViewButton>
        <ViewButton as="span" $w={22}><Rule $h={14} $tone="#d6d9e0" /></ViewButton>
        <ViewButton $on aria-label="普通视图">
          <Icon><path d="M.5.5h15v15H.5zM.5 5.500h15M.5 10.500h15M5.500.5v15M10.500.5v15" /></Icon>
        </ViewButton>
        <ViewButton $w={28} aria-label="页面布局">
          <Icon><path d="M.5.5h15v15H.5zM3.500 3.500h9v9h-9zM8 3.500v9" /></Icon>
        </ViewButton>
        <ViewButton $w={26} aria-label="分页预览">
          <Icon><path d="M.5.5h15v15H.5zM.5 9.500h10v-9M5.500.5v9" /></Icon>
        </ViewButton>
        <ViewButton as="span" $w={10}><Rule $h={14} $tone="#d6d9e0" /></ViewButton>
        <ZoomButton>145%<Caret /></ZoomButton>
        <button aria-label="缩小"><Icon w={10} h={10} weight={2}><path d="M0 5h10" /></Icon></button>
        <Slider type="range" min="0" max="100" defaultValue="54" aria-label="缩放" />
        <button aria-label="放大"><Icon w={10} h={10} weight={2}><path d="M0 5h10M5 0v10" /></Icon></button>
        <FullScreen aria-label="全屏">
          <Icon w={14} h={14}><path d="M.5 4V.5H4M10 .5h3.500V4M.5 10v3.500H4M13.500 10v3.500H10M.5.5l4 4M13.500.5l-4 4M.5 13.500l4-4M13.500 13.500l-4-4" /></Icon>
        </FullScreen>
      </ViewTools>
    </StatusBar>
  );
}

/* ---------- floating desktop widgets ---------- */
const Upload = styled.button`
  position: absolute;
  z-index: 3;
  top: 32px;
  right: 80px;
  width: 128px;
  height: 32px;
  display: flex;
  align-items: center;
  overflow: hidden;
  color: #0a9cff;
  background: #edf8ff;
  border: 1px solid #14a8ff;
  border-radius: 8px;
`;
const UploadMark = styled.span`
  width: 35px;
  height: 32px;
  display: flex;
  align-items: center;
  justify-content: center;
  background: linear-gradient(135deg, #0aa6ff, #0a86ff);
`;
const UploadText = styled.span`
  flex: 1;
  text-align: center;
  padding-right: 6px;
`;
const Meter = styled.div`
  position: absolute;
  z-index: 2;
  right: 0;
  bottom: 88px;
  width: 10px;
  height: 58px;
  padding: 7px 1px 6px 4px;
  border-radius: 4px 0 0 4px;
  background: #50535f;
  div {
    height: 100%;
    background: repeating-linear-gradient(#50535f 0 1px, transparent 1px 2px), linear-gradient(#22242c 14px, #e8d84c 14px);
  }
`;
const Ime = styled.div`
  position: absolute;
  z-index: 3;
  right: 0;
  bottom: 87px;
  height: 26px;
  width: 126px;
  display: flex;
  align-items: center;
  gap: 10px;
  padding: 0 4px 0 8px;
  background: #fff;
  border: 1px solid #b4c8e8;
  color: #0b6fd6;
  font: 700 16px/24px "Noto Sans CJK SC", sans-serif;
`;
const SogouMark = styled.svg`
  position: absolute;
  z-index: 4;
  right: 122px;
  bottom: 86px;
`;
const Watermark = styled.div`
  position: absolute;
  z-index: 4;
  right: 10px;
  bottom: 8px;
  display: flex;
  align-items: center;
  opacity: 0.85;
  pointer-events: none;
`;
const MarkText = styled.div`
  display: flex;
  flex-direction: column;
  color: #4a92cf;
  font: 500 22px/24px "Noto Sans CJK SC", sans-serif;
`;
const MarkUrl = styled.span`
  padding-left: 4px;
  color: #5cc878;
  font: 400 17px/20px "Liberation Sans", sans-serif;
  -webkit-text-stroke: 1px #5cc878;
`;

function Floating() {
  return (
    <>
      <Upload>
        <UploadMark>
          <svg width="20" height="16" viewBox="0 0 20 16" fill="none" stroke="#fff" strokeWidth="2.500" aria-hidden="true">
            <circle cx="10" cy="4.500" r="3.200" /><circle cx="4.500" cy="11" r="3.200" />
            <path d="M7 8.500l5.500 4.500a3.200 3.200 0 1 0 1-4.500" />
          </svg>
        </UploadMark>
        <UploadText>拖拽上传</UploadText>
      </Upload>
      <Meter><div /></Meter>
      <Ime>
        中
        <svg width="14" height="12" viewBox="0 0 14 12" aria-hidden="true">
          <circle cx="3" cy="3" r="2" fill="none" stroke="#0b6fd6" strokeWidth="1.500" />
          <path d="M9 5h3.500v3L10 11.500V8H9z" fill="#0b6fd6" />
        </svg>
        <svg width="14" height="16" viewBox="0 0 14 16" aria-hidden="true">
          <rect x="4" y="0" width="6" height="10" rx="3" fill="#0b6fd6" />
          <path d="M1.500 7q0 5 5.500 5t5.500-5M7 12v3M4 15h6" fill="none" stroke="#0b6fd6" strokeWidth="1.500" />
        </svg>
        <svg width="15" height="12" viewBox="0 0 15 12" aria-hidden="true">
          <rect x=".8" y=".8" width="13.400" height="10.400" rx="1" fill="none" stroke="#0b6fd6" strokeWidth="1.600" />
          <path d="M3 4h9M3 6.500h9" stroke="#0b6fd6" strokeWidth="1.500" strokeDasharray="2 1" />
          <path d="M4 9h7" stroke="#0b6fd6" strokeWidth="1.500" />
        </svg>
        <svg width="13" height="13" viewBox="0 0 13 13" fill="#0b6fd6" aria-hidden="true">
          <rect width="6" height="6" rx="1" /><rect y="7" width="6" height="6" rx="1" /><rect x="7" y="7" width="6" height="6" rx="1" />
          <rect x="8" y="1" width="4" height="4" rx="1" fill="none" stroke="#0b6fd6" strokeWidth="1.500" />
        </svg>
      </Ime>
      <SogouMark width="32" height="32" viewBox="0 0 32 32" aria-hidden="true">
        <rect x="3" y="3" width="26" height="26" rx="3" fill="#f4511e" transform="rotate(-12 16 16)" />
        <path d="M25 7Q12 5 9 9.500Q7 13.500 15 14.500Q25 16 23 20.500Q20 26 7 24" fill="none" stroke="#fff" strokeWidth="4" />
      </SogouMark>
      <Watermark>
        <svg width="44" height="40" viewBox="0 0 44 40" aria-hidden="true">
          <defs>
            <linearGradient id="sweep" x1="0" y1="1" x2="1" y2="0">
              <stop offset="0" stopColor="#3a78c8" /><stop offset="1" stopColor="#7cd4f4" />
            </linearGradient>
            <linearGradient id="leaf" x1="0" y1="1" x2="1" y2="0">
              <stop offset="0" stopColor="#d8dc50" /><stop offset="1" stopColor="#40b878" />
            </linearGradient>
          </defs>
          <path d="M44 0Q20 0 7 13Q-5 26 4 31Q2 22 15 12Q28 3 44 0z" fill="url(#sweep)" />
          <path d="M38 6Q18 8 14 16Q12 21 20 24Q27 28 18 33Q10 37 4 33Q8 40 22 36Q34 31 32 25Q30 21 24 18Q20 14 38 6z" fill="url(#sweep)" />
          <path d="M28 14Q42 12 40 22Q36 38 4 40Q24 34 30 26Q33 20 28 14z" fill="url(#leaf)" />
        </svg>
        <MarkText>
          极光下载站
          <MarkUrl>www.xz7.com</MarkUrl>
        </MarkText>
      </Watermark>
    </>
  );
}

export default function App() {
  return (
    <Page>
      <Global />
      <Title />
      <Menu />
      <Ribbon />
      <Workspace>
        <Main>
          <FormulaBar>
            <NameBox>
              <input type="text" aria-label="名称框" defaultValue="B10" />
              <Caret />
            </NameBox>
            <FormulaTools>
              <Icon tone={c.soft}>
                <circle cx="7" cy="7" r="6" /><path d="M11.500 11.500l4 4M4.500 5.500h5M4.500 8.500h5" />
              </Icon>
              fx
            </FormulaTools>
            <FormulaInput type="text" aria-label="编辑栏" />
          </FormulaBar>
          <SheetArea>
            <Sheet />
            <VScroll>
              <SplitGrip />
              <VTrack>
                <ArrowMark d="M3 0l3 4H0z" />
                <VSpace $n={76} />
                <VThumb />
                <VSpace $n={49} />
                <ArrowMark d="M0 0h6L3 4z" />
              </VTrack>
            </VScroll>
          </SheetArea>
          <SheetBar>
            <SheetNav>
              <Icon w={10} h={12} tone="#b4b7be"><path d="M.5 0v12M9 .5L3.500 6L9 11.500" /></Icon>
              <Icon w={10} h={12} tone="#b4b7be"><path d="M7 .5L1.500 6L7 11.500" /></Icon>
              <Icon w={10} h={12} tone="#b4b7be"><path d="M2 .5L7.500 6L2 11.500" /></Icon>
              <Icon w={10} h={12} tone="#b4b7be"><path d="M9.500 0v12M1 .5L6.500 6L1 11.500" /></Icon>
            </SheetNav>
            <SheetTab>Sheet1</SheetTab>
            <PlusButton $w={24} aria-label="新建工作表">
              <Icon w={13} h={13} tone={c.soft}><path d="M6.500 0v13M0 6.500h13" /></Icon>
            </PlusButton>
            <HScroll>
              <HGrip />
              <HTrack>
                <ArrowMark w={4} h={6} d="M4 0v6L0 3z" />
                <HThumb />
                <HSpace />
                <ArrowMark w={4} h={6} d="M0 0l4 3l-4 3z" />
              </HTrack>
              <HGrip />
            </HScroll>
          </SheetBar>
        </Main>
        <SelectionPane />
        <TaskRail />
      </Workspace>
      <Status />
      <Floating />
    </Page>
  );
}
